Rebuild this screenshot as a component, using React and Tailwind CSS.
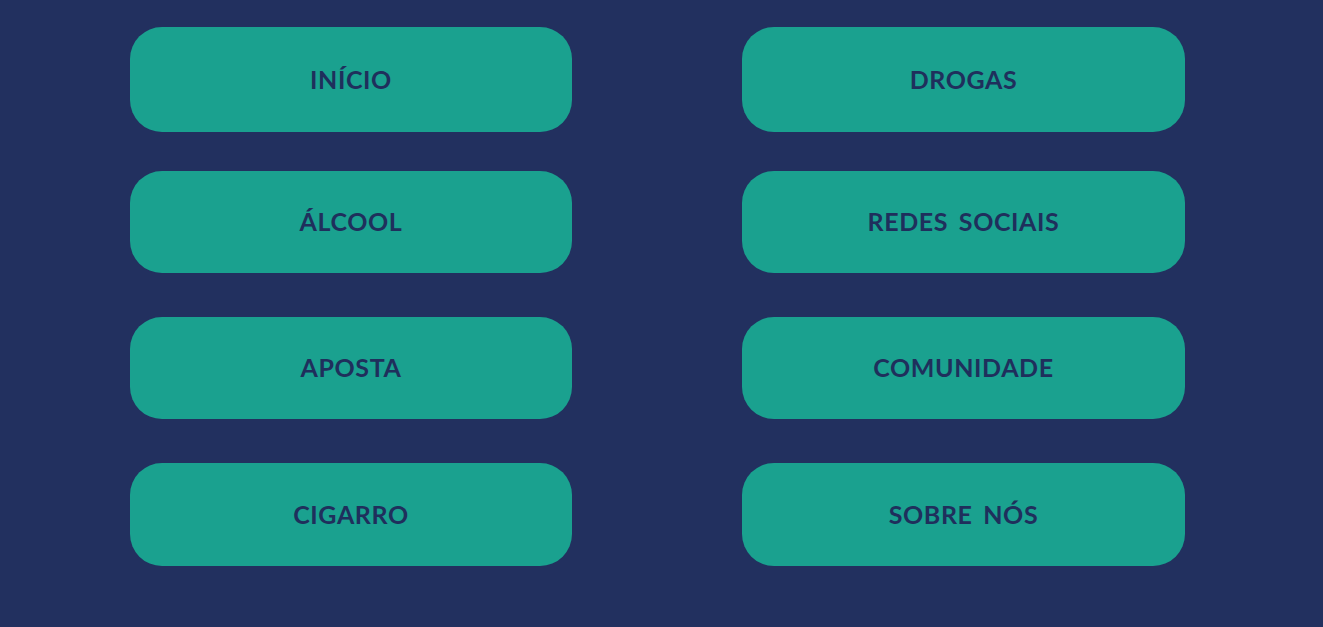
const rows = [
  { items: ['INÍCIO', 'DROGAS'], h: 'h-[105px]' },
  { items: ['ÁLCOOL', 'REDES SOCIAIS'], h: 'h-[102px]' },
  { items: ['APOSTA', 'COMUNIDADE'], h: 'h-[102px]' },
  { items: ['CIGARRO', 'SOBRE NÓS'], h: 'h-[103px]' },
];

export default function App() {
  return (
    <div className="min-h-[627px] w-full bg-[#22305f] pt-[27px] font-['Lato',sans-serif]">
      <div className="ml-[130px] flex w-[1055px] flex-col gap-[44px]">
        {rows.map((row, i) => (
          <div key={i} className={`flex gap-[170px] ${i === 1 ? '-mt-[5px]' : ''}`}>
            {row.items.map((label, j) => (
              <button
                key={label}
                className={`flex ${row.h} ${j === 0 ? 'w-[442px]' : 'w-[443px]'} items-center justify-center rounded-[32px] bg-[#1aa18f] text-[25px] font-bold tracking-[0.6px] text-[#1f2f5c] [word-spacing:4px]`}
              >
                {label}
              </button>
            ))}
          </div>
        ))}
      </div>
    </div>
  );
}
